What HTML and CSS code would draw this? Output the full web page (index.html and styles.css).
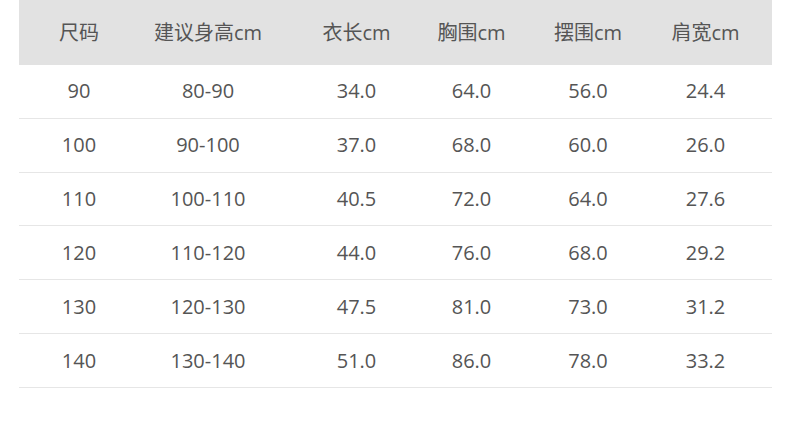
FILE: index.html
```html
<!DOCTYPE html>
<html lang="zh">
<head>
<meta charset="utf-8">
<title>尺码表</title>
<link rel="stylesheet" href="styles.css">
</head>
<body>
<div class="size-table">
  <div class="row head">
    <div class="cell">尺码</div><div class="cell">建议身高cm</div><div class="cell">衣长cm</div><div class="cell">胸围cm</div><div class="cell">摆围cm</div><div class="cell">肩宽cm</div><div class="cell"></div>
  </div>
  <div class="row">
    <div class="cell">90</div><div class="cell">80-90</div><div class="cell">34.0</div><div class="cell">64.0</div><div class="cell">56.0</div><div class="cell">24.4</div><div class="cell"></div>
  </div>
  <div class="row">
    <div class="cell">100</div><div class="cell">90-100</div><div class="cell">37.0</div><div class="cell">68.0</div><div class="cell">60.0</div><div class="cell">26.0</div><div class="cell"></div>
  </div>
  <div class="row">
    <div class="cell">110</div><div class="cell">100-110</div><div class="cell">40.5</div><div class="cell">72.0</div><div class="cell">64.0</div><div class="cell">27.6</div><div class="cell"></div>
  </div>
  <div class="row">
    <div class="cell">120</div><div class="cell">110-120</div><div class="cell">44.0</div><div class="cell">76.0</div><div class="cell">68.0</div><div class="cell">29.2</div><div class="cell"></div>
  </div>
  <div class="row">
    <div class="cell">130</div><div class="cell">120-130</div><div class="cell">47.5</div><div class="cell">81.0</div><div class="cell">73.0</div><div class="cell">31.2</div><div class="cell"></div>
  </div>
  <div class="row">
    <div class="cell">140</div><div class="cell">130-140</div><div class="cell">51.0</div><div class="cell">86.0</div><div class="cell">78.0</div><div class="cell">33.2</div><div class="cell"></div>
  </div>
</div>
</body>
</html>
```
FILE: styles.css
```css
html, body {
  margin: 0;
  padding: 0;
  background: #ffffff;
}
body {
  font-family: "Open Sans", "Noto Sans CJK SC", sans-serif;
  font-size: 20px;
  color: #555555;
}
.size-table {
  width: 753px;
  margin-left: 19px;
}
.row {
  display: grid;
  grid-template-columns: 120px 138px 159px 71px 162px 73px 30px;
  height: 52.84px;
  align-items: center;
  border-bottom: 1px solid #e6e6e6;
}
.row.head {
  height: 65px;
  background: #e2e2e2;
  border-bottom: none;
}
.cell {
  text-align: center;
  white-space: nowrap;
  line-height: 1;
}
```
